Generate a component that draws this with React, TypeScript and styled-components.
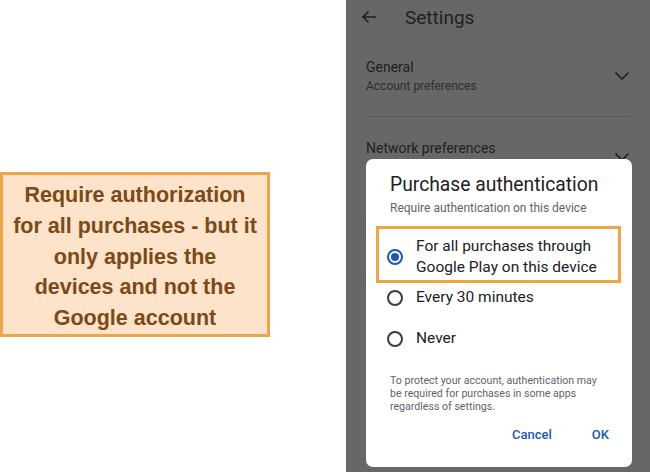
import React from 'react'
import styled, { createGlobalStyle } from 'styled-components'

const colors = {
  scrim: '#676767',
  scrimText: '#1f1f1f',
  scrimSub: '#2e2e2e',
  ink: '#202124',
  muted: '#5f6368',
  blue: '#1a57b8',
  orange: '#f0a448',
  peach: '#fce3c9',
  brown: '#7b4a16',
}

const GlobalStyle = createGlobalStyle`
  html, body {
    margin: 0;
    padding: 0;
    background: #ffffff;
  }
  body {
    font-family: Roboto, 'Liberation Sans', sans-serif;
  }
`

const Page = styled.div`
  display: flex;
  width: 650px;
  height: 472px;
  overflow: hidden;
`

const Side = styled.div`
  width: 346px;
  padding-top: 172px;
  box-sizing: border-box;
`

const Callout = styled.div`
  width: 270px;
  height: 165px;
  box-sizing: border-box;
  border: 3px solid ${colors.orange};
  background: ${colors.peach};
  display: flex;
  align-items: center;
  justify-content: center;
  padding-top: 5px;
  text-align: center;
  font: 700 21.5px/30.8px 'Liberation Sans', Arial, sans-serif;
  color: ${colors.brown};
`

const Phone = styled.div`
  position: relative;
  flex: 1;
  background: ${colors.scrim};
`

const TopBar = styled.div`
  display: flex;
  align-items: center;
  height: 34px;
  padding-left: 15px;
  gap: 28px;
  font: 400 19px Roboto, sans-serif;
  color: ${colors.scrimText};
`

const Section = styled.div<{ $divider?: boolean }>`
  display: flex;
  align-items: center;
  justify-content: space-between;
  margin: 0 20px 0 20px;
  padding: ${(p) => (p.$divider ? '23px 0 21px' : '17px 0')};
  border-bottom: ${(p) => (p.$divider ? '1px solid #575757' : 'none')};
`

const SectionTitle = styled.div`
  font: 400 14px/20px Roboto, sans-serif;
  color: ${colors.scrimText};
`

const SectionSub = styled.div`
  font: 400 12px/18px Roboto, sans-serif;
  color: ${colors.scrimSub};
`

const ChevronSlot = styled.div<{ $drop?: number }>`
  display: flex;
  margin-top: ${(p) => p.$drop ?? 0}px;
`

const Dialog = styled.div`
  position: absolute;
  left: 20px;
  top: 159px;
  width: 266px;
  height: 308px;
  box-sizing: border-box;
  background: #ffffff;
  border-radius: 7px;
  padding: 14px 0 0 24px;
  display: flex;
  flex-direction: column;
`

const DialogTitle = styled.div`
  font: 400 19.3px/24px Roboto, sans-serif;
  color: ${colors.ink};
`

const DialogSub = styled.div`
  margin-top: 3px;
  font: 400 12px/16px Roboto, sans-serif;
  color: ${colors.muted};
`

const Options = styled.div`
  margin: 10px 0 0 -14px;
  display: flex;
  flex-direction: column;
`

const Option = styled.div<{ $highlight?: boolean; $gap?: number }>`
  display: flex;
  align-items: center;
  gap: 13px;
  width: 245px;
  box-sizing: border-box;
  margin-top: ${(p) => p.$gap ?? 0}px;
  padding: ${(p) => (p.$highlight ? '7px 0 2px 8px' : '0 0 0 11px')};
  border: ${(p) => (p.$highlight ? `3px solid ${colors.orange}` : 'none')};
  font: 400 15.5px/21px Roboto, sans-serif;
  color: ${colors.ink};
`

const Radio = styled.span<{ $on?: boolean }>`
  flex: none;
  width: 16px;
  height: 16px;
  box-sizing: border-box;
  border-radius: 50%;
  border: 2px solid ${(p) => (p.$on ? colors.blue : '#3c3c3c')};
  display: flex;
  align-items: center;
  justify-content: center;
  &::after {
    content: '';
    display: ${(p) => (p.$on ? 'block' : 'none')};
    width: 8px;
    height: 8px;
    border-radius: 50%;
    background: ${colors.blue};
  }
`

const Note = styled.div`
  margin-top: 25px;
  width: 214px;
  font: 400 10.6px/13px Roboto, sans-serif;
  color: ${colors.muted};
`

const Actions = styled.div`
  display: flex;
  justify-content: flex-end;
  gap: 40px;
  margin: 14px 23px 0 0;
  font: 500 13px/16px Roboto, sans-serif;
  color: ${colors.blue};
`

const Chevron = () => (
  <svg width="16" height="10" viewBox="0 0 16 10" fill="none">
    <path d="M1.5 1.5L8 8L14.5 1.5" stroke={colors.scrimText} strokeWidth="1.6" />
  </svg>
)

const BackArrow = () => (
  <svg width="16" height="14" viewBox="0 0 16 14" fill="none">
    <path d="M15 7H2M7.5 1.5L2 7l5.5 5.5" stroke={colors.scrimText} strokeWidth="1.6" />
  </svg>
)

export default function App() {
  return (
    <Page>
      <GlobalStyle />
      <Side>
        <Callout>
          Require authorization
          <br />
          for all purchases - but it
          <br />
          only applies the
          <br />
          devices and not the
          <br />
          Google account
        </Callout>
      </Side>
      <Phone>
        <TopBar>
          <BackArrow />
          <span>Settings</span>
        </TopBar>
        <Section $divider>
          <div>
            <SectionTitle>General</SectionTitle>
            <SectionSub>Account preferences</SectionSub>
          </div>
          <ChevronSlot>
            <Chevron />
          </ChevronSlot>
        </Section>
        <Section>
          <SectionTitle>Network preferences</SectionTitle>
          <ChevronSlot $drop={18}>
            <Chevron />
          </ChevronSlot>
        </Section>
        <Dialog>
          <DialogTitle>Purchase authentication</DialogTitle>
          <DialogSub>Require authentication on this device</DialogSub>
          <Options>
            <Option $highlight>
              <Radio $on />
              <span>
                For all purchases through
                <br />
                Google Play on this device
              </span>
            </Option>
            <Option $gap={4}>
              <Radio />
              <span>Every 30 minutes</span>
            </Option>
            <Option $gap={20}>
              <Radio />
              <span>Never</span>
            </Option>
          </Options>
          <Note>
            To protect your account, authentication may be required for purchases in some apps
            regardless of settings.
          </Note>
          <Actions>
            <span>Cancel</span>
            <span>OK</span>
          </Actions>
        </Dialog>
      </Phone>
    </Page>
  )
}
